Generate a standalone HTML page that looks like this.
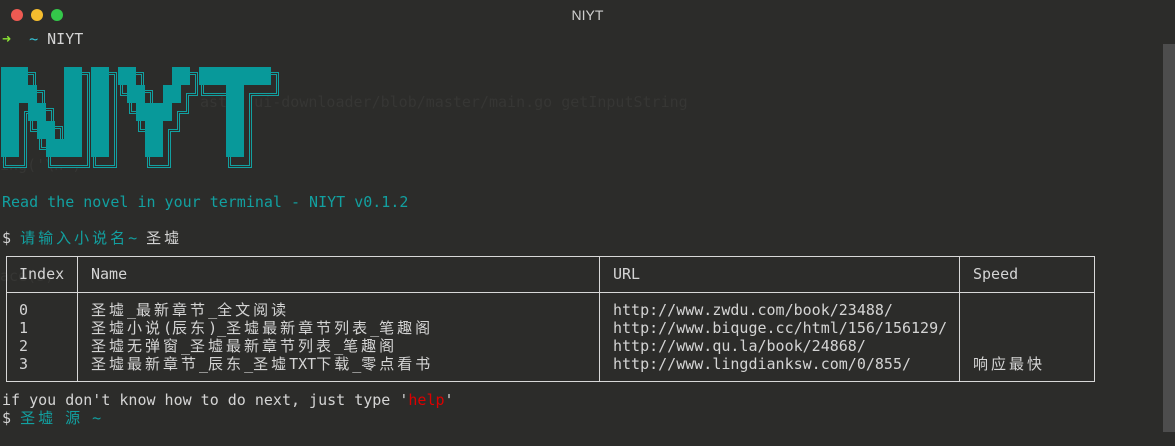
<!DOCTYPE html>
<html><head><meta charset="utf-8"><style>
html,body{margin:0;padding:0;}
body{width:1175px;height:446px;background:#2c2c2a;position:relative;overflow:hidden;font-family:"DejaVu Sans Mono","Liberation Mono","Noto Sans CJK SC",monospace;font-size:15px;color:#d4d4d4;}
.tb{position:absolute;left:0;top:0;width:1175px;height:30px;background:#2c2c2a;}
.dot{position:absolute;top:9px;width:12px;height:12px;border-radius:50%;}
.title{position:absolute;top:7px;left:0;width:1175px;text-align:center;font-family:"Liberation Sans",sans-serif;font-size:14px;color:#cfcfcf;}
.l{position:absolute;left:2px;white-space:pre;line-height:18px;}
.c{font-family:"Noto Sans CJK SC",sans-serif;letter-spacing:3px;}
.teal{color:#12a0a0;}
.faint{color:#363634;}
.v{position:absolute;width:1px;background:#d8d8d8;}
.h{position:absolute;height:1px;background:#d8d8d8;}
.sb{position:absolute;left:1163px;top:44px;width:12px;height:388px;background:#4d4d4d;}
</style></head><body>
<div class="tb">
<div class="dot" style="left:11px;background:#ee5a52"></div>
<div class="dot" style="left:31px;background:#f5bd2e"></div>
<div class="dot" style="left:51px;background:#34c84a"></div>
<div class="title">NIYT</div>
</div>
<div class="sb"></div>

<div class="l faint" style="top:93px;left:200px">aster/ui-downloader/blob/master/main.go getInputString</div>
<div class="l faint" style="top:136px;left:0">is.</div>
<div class="l faint" style="top:156px;left:0">ing('\n')</div>
<div class="l faint" style="top:267px;left:0">ace(s)</div>

<div class="l" style="top:30px"><span style="color:#8ae234">➜</span>  <span style="color:#34c3d6">~</span> NIYT</div>

<svg style="position:absolute;left:0;top:0" width="300" height="180">
<defs>
<g id="r">
<rect x="0" y="0" width="18" height="90"/><rect x="18" y="0" width="9" height="18"/>
<rect x="18" y="18" width="18" height="18"/><rect x="27" y="36" width="18" height="18"/>
<rect x="36" y="54" width="18" height="18"/><rect x="45" y="72" width="18" height="18"/>
<rect x="63" y="0" width="18" height="90"/>
<rect x="90" y="0" width="18" height="90"/>
<rect x="117" y="0" width="18" height="18"/><rect x="171" y="0" width="18" height="18"/>
<rect x="126" y="18" width="18" height="18"/><rect x="162" y="18" width="18" height="18"/>
<rect x="135" y="36" width="36" height="18"/><rect x="144" y="54" width="18" height="36"/>
<rect x="198" y="0" width="72" height="18"/><rect x="225" y="18" width="18" height="72"/>
</g>
</defs>
<g transform="translate(6,75)" fill="#12a0a0" stroke="#12a0a0" stroke-width="6"><use href="#r"/></g>
<g transform="translate(6,75)" fill="#2c2c2a" stroke="#2c2c2a" stroke-width="4"><use href="#r"/></g>
<g transform="translate(6,75)" fill="#12a0a0" stroke="#12a0a0" stroke-width="2"><use href="#r"/></g>
<g transform="translate(6,75)" fill="#2c2c2a"><use href="#r"/></g>
<g transform="translate(1,67)" fill="#08999a"><use href="#r"/></g>
</svg>

<div class="l teal" style="top:193px">Read the novel in your terminal - NIYT v0.1.2</div>
<div class="l" style="top:229px">$ <span class="teal c">请输入小说名</span><span class="teal">~</span> <span class="c">圣墟</span></div>

<div class="h" style="left:6px;top:256px;width:1089px"></div>
<div class="h" style="left:6px;top:292px;width:1089px"></div>
<div class="h" style="left:6px;top:381px;width:1089px"></div>
<div class="v" style="left:6px;top:256px;height:126px"></div>
<div class="v" style="left:77px;top:256px;height:126px"></div>
<div class="v" style="left:599px;top:256px;height:126px"></div>
<div class="v" style="left:959px;top:256px;height:126px"></div>
<div class="v" style="left:1094px;top:256px;height:126px"></div>

<div class="l" style="top:265px;left:19px">Index</div>
<div class="l" style="top:265px;left:91px">Name</div>
<div class="l" style="top:265px;left:613px">URL</div>
<div class="l" style="top:265px;left:973px">Speed</div>

<div class="l" style="top:301px;left:19px">0
1
2
3</div>
<div class="l" style="top:301px;left:91px"><span class="c">圣墟</span>_<span class="c">最新章节</span>_<span class="c">全文阅读</span>
<span class="c">圣墟小说</span>(<span class="c">辰东</span>)_<span class="c">圣墟最新章节列表</span>_<span class="c">笔趣阁</span>
<span class="c">圣墟无弹窗</span>_<span class="c">圣墟最新章节列表</span>_<span class="c">笔趣阁</span>
<span class="c">圣墟最新章节</span>_<span class="c">辰东</span>_<span class="c">圣墟</span>TXT<span class="c">下载</span>_<span class="c">零点看书</span></div>
<div class="l" style="top:301px;left:613px">http://www.zwdu.com/book/23488/
http://www.biquge.cc/html/156/156129/
http://www.qu.la/book/24868/
http://www.lingdianksw.com/0/855/</div>
<div class="l c" style="top:355px;left:973px">响应最快</div>

<div class="l" style="top:391px">if you don't know how to do next, just type '<span style="color:#d00">help</span>'</div>
<div class="l" style="top:409px">$ <span class="teal c">圣墟</span> <span class="teal c">源</span> <span class="teal">~</span></div>
</body></html>
